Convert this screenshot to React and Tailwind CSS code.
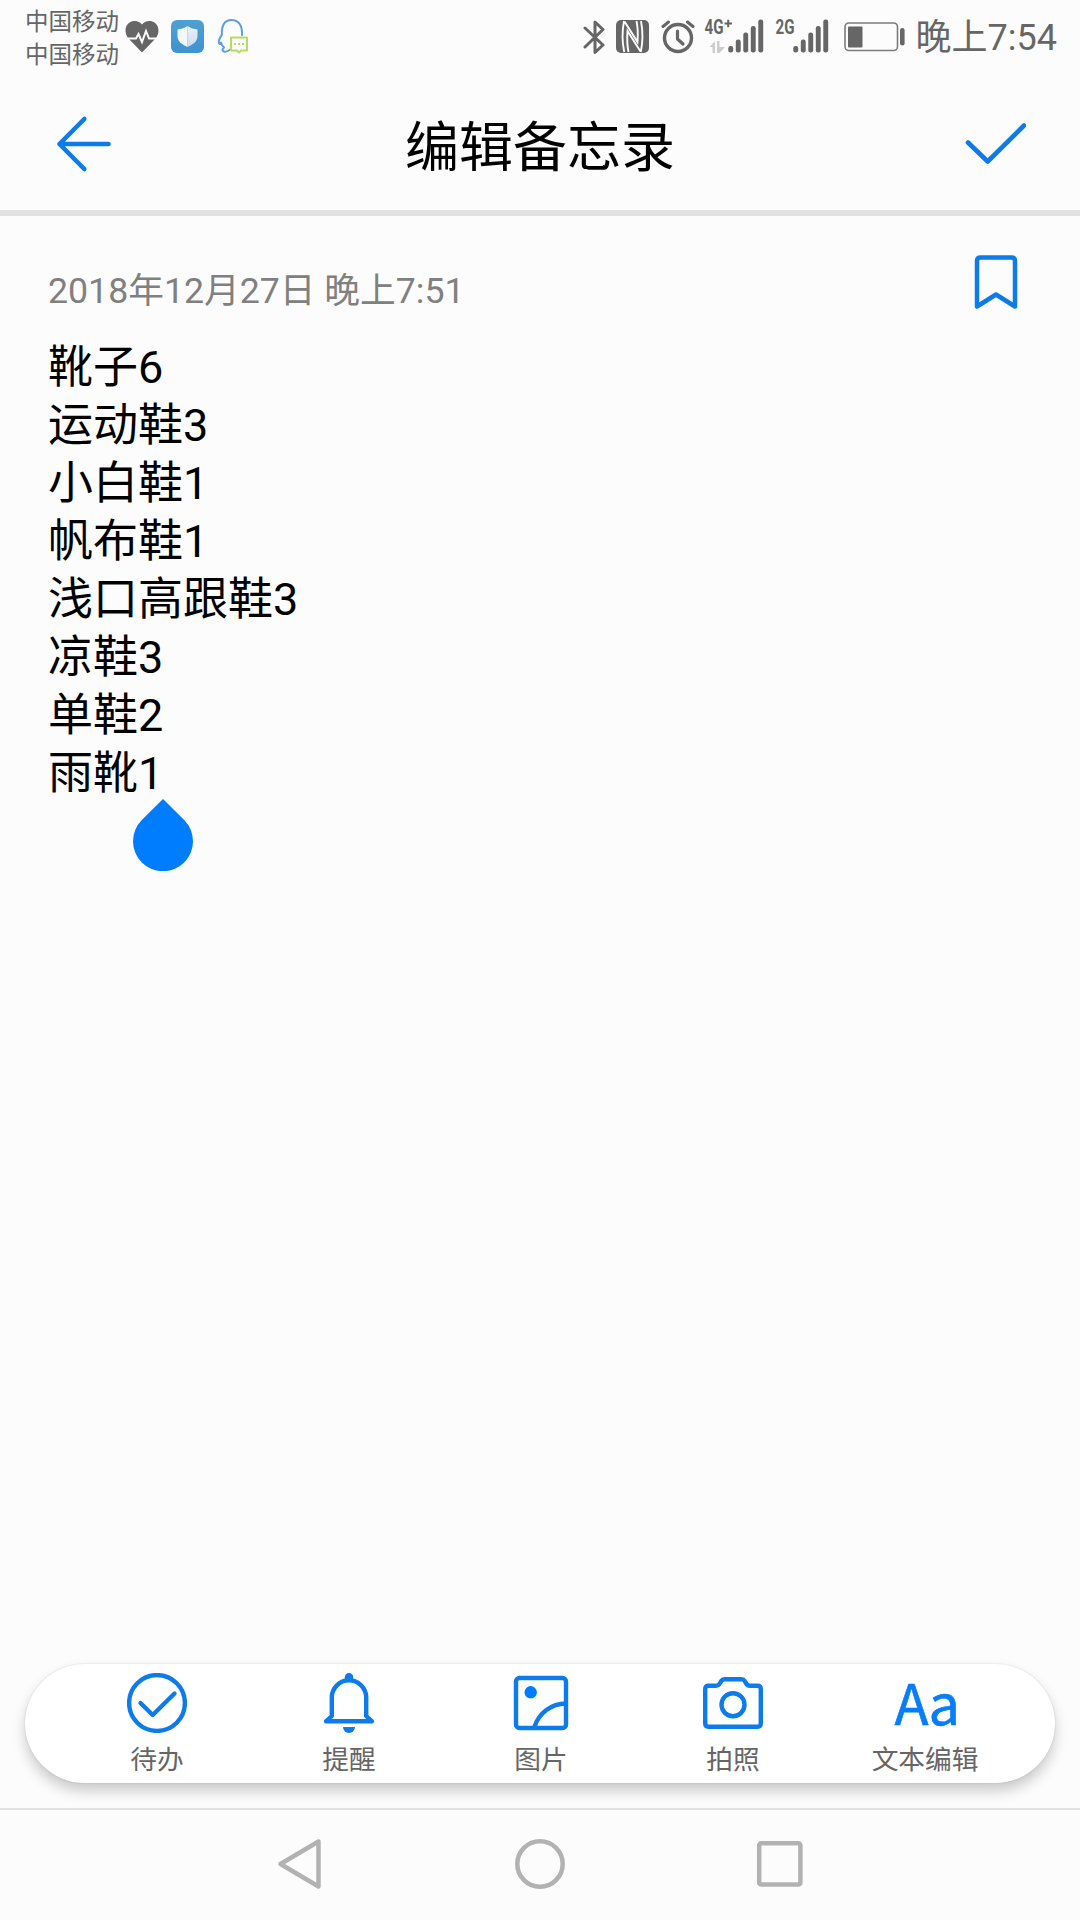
const noteLines = ['靴子6', '运动鞋3', '小白鞋1', '帆布鞋1', '浅口高跟鞋3', '凉鞋3', '单鞋2', '雨靴1'];

const HeartIcon = () => (
  <svg className="ml-[5px] h-10 w-9" viewBox="0 0 36 40">
    <path d="M18 36.500 L4 22 C-0.500 16 1 6.500 9.500 5 C13 4.500 16 6 18 8.500 C20 6 23 4.500 26.500 5 C35 6.500 36.500 16 32 22 Z" fill="#666666" />
    <path d="M0 22.500 H12 L14.500 18 L18 26 L22 15 L25 22.500 H36" fill="none" stroke="#fcfcfc" strokeWidth="2" />
  </svg>
);

const ShieldIcon = () => (
  <svg className="ml-[11px] h-[33px] w-[33px]" viewBox="0 0 33 33">
    <defs>
      <linearGradient id="shieldBg" x1="0" y1="0" x2="0" y2="1">
        <stop offset="0" stopColor="#4fa0d2" />
        <stop offset="1" stopColor="#3e93cf" />
      </linearGradient>
      <linearGradient id="shieldRight" x1="0" y1="0" x2="0" y2="1">
        <stop offset="0" stopColor="#eaf2f8" />
        <stop offset="1" stopColor="#c9deed" />
      </linearGradient>
    </defs>
    <rect width="33" height="33" rx="6" fill="url(#shieldBg)" />
    <path d="M16.500 6 C13 8.500 10 9 6.500 9.500 V16 C6.500 21.500 11 24.500 16.500 27 Z" fill="#f3f8fb" />
    <path d="M16.500 6 C20 8.500 23 9 26.500 9.500 V16 C26.500 21.500 22 24.500 16.500 27 Z" fill="url(#shieldRight)" />
  </svg>
);

const ChatIcon = () => (
  <svg className="ml-[13px] h-9 w-8" viewBox="0 0 32 36" fill="none" strokeLinejoin="round" strokeLinecap="round">
    <path d="M13 31.500 C11 34 6 34.500 5.500 32 C5.500 30.500 7 30 7 29.500 C5.500 28 4.500 26.500 4 24.500 C3 26.500 1.800 26.500 1.800 24 C1.800 21 3.500 19 4.800 17 C4.500 8 7 2 14.500 2 C22 2 25.500 8 25 17" stroke="#5c9fe0" strokeWidth="2" />
    <path d="M14 19.500 H30 V32.500 H24 L22 34.500 L20 32.500 H14 Z" fill="#fcfcfc" stroke="#b5dc60" strokeWidth="2" />
    <path d="M18 26 h0.100 M22 26 h0.100 M26 26 h0.100" stroke="#a9d548" strokeWidth="2.200" />
  </svg>
);

const BluetoothIcon = () => (
  <svg className="h-9 w-[22px]" viewBox="0 0 22 36" fill="none" stroke="#666666" strokeWidth="3" strokeLinejoin="round" strokeLinecap="round">
    <path d="M2 9 L20 26 L12 33.500 V3 L20 10.500 L2 28" />
  </svg>
);

// White ribbon cut out of a rounded grey tile
const NfcIcon = () => (
  <svg className="ml-[11px] h-[33px] w-[33px]" viewBox="0 0 33 33">
    <rect width="33" height="33" rx="5" fill="#666666" />
    <path d="M8 1 C6.300 10 6.300 23 8.200 32 M12.500 32 C11 25 11 18 11.500 11 L24.500 31.500 M25 1 C26.700 10 26.700 23 24.800 32 M20.500 1 C22 8 22 15 21.500 22 L8.500 1.500" fill="none" stroke="#fcfcfc" strokeWidth="1.900" />
  </svg>
);

const AlarmIcon = () => (
  <svg className="ml-3 h-[35px] w-[34px]" viewBox="0 0 34 35" fill="none" stroke="#666666" strokeLinecap="round">
    <circle cx="17" cy="19" r="13.500" strokeWidth="3.400" />
    <path d="M16.500 12 V20 L22 25" strokeWidth="3.200" strokeLinejoin="round" />
    <path d="M2 7.500 L7.500 3 M32 7.500 L26.500 3" strokeWidth="3" />
  </svg>
);

const SignalIcon = ({ label, labelX, data, className }) => (
  <svg className={className} viewBox="0 0 62 36" overflow="visible">
    <text x={labelX} y="15" fill="#666666" fontFamily="Roboto, sans-serif" fontWeight="700" fontSize="21" textLength="19" lengthAdjust="spacingAndGlyphs">
      {label}
    </text>
    {data && <path d="M21.500 4.500 h7.500 M25.200 0.800 v7.500" stroke="#666666" strokeWidth="2" />}
    {data && <path d="M6.500 28 L12 22 V34 H9.500 V28 Z M14 22 H16.500 V28 H22 L16.500 34 H14 Z" fill="#cccccc" />}
    {[27, 20.5, 13.5, 7, 0.5].map((top, i) => (
      <rect key={top} x={25.300 + i * 7.500} y={top} width="4.900" height={33.500 - top} rx="2.200" fill="#666666" />
    ))}
  </svg>
);

const BatteryIcon = () => (
  <svg className="ml-3.5 h-[30px] w-[62px]" viewBox="0 0 62 30">
    <rect x="1" y="1" width="52.500" height="27.500" rx="4" fill="none" stroke="#7b7b7b" strokeWidth="1.600" />
    <rect x="4" y="4.500" width="14.500" height="21" rx="1" fill="#666666" />
    <rect x="56" y="6" width="4.600" height="17.500" rx="2.200" fill="#666666" />
  </svg>
);

const StatusBar = () => (
  <div className="flex h-[72px] items-center pl-[25px] pr-[23px] text-[#666666]">
    <div className="w-[94px] pt-[5px] text-[23.500px] leading-[33px] whitespace-nowrap">
      <p>中国移动</p>
      <p>中国移动</p>
    </div>
    <HeartIcon />
    <ShieldIcon />
    <ChatIcon />
    <div className="ml-auto flex items-center pt-px">
      <BluetoothIcon />
      <NfcIcon />
      <AlarmIcon />
      <SignalIcon label="4G" labelX="1.500" data className="ml-2 h-9 w-[62px]" />
      <SignalIcon label="2G" labelX="7.500" className="ml-[3px] h-9 w-[62px]" />
      <BatteryIcon />
      <span className="ml-2.5 pt-[3px] text-4xl leading-[66px]">晚上7:54</span>
    </div>
  </div>
);

const tools = [
  {
    label: '待办',
    icon: (
      <>
        <circle cx="30" cy="30" r="27.900" />
        <path d="M13.500 30 L25.700 42 L47.500 20.500" />
      </>
    ),
  },
  {
    label: '提醒',
    icon: (
      <>
        <circle cx="30" cy="4.200" r="4.200" fill="#0d7bea" stroke="none" />
        <path d="M12.800 43 V24.500 A17.200 17.200 0 0 1 47.200 24.500 V43 L53 48.300 H7 Z" />
        <path d="M24 54 H36 A6 6 0 0 1 24 54 Z" fill="#0d7bea" stroke="none" />
      </>
    ),
  },
  {
    label: '图片',
    icon: (
      <>
        <rect x="5" y="5" width="50" height="50" rx="3.500" />
        <circle cx="19.700" cy="19.300" r="6.200" fill="#007dff" stroke="none" />
        <path d="M23.500 54 A33 33 0 0 1 55 30.500" />
      </>
    ),
  },
  {
    label: '拍照',
    icon: (
      <>
        <path d="M5.500 12.700 H13 Q15.500 12.700 16.800 10.500 L18.300 8 Q19.300 6.300 21.500 6.300 H38.500 Q40.700 6.300 41.700 8 L43.200 10.500 Q44.500 12.700 47 12.700 H54.500 Q57.800 12.700 57.800 16.200 V50.200 Q57.800 53.700 54.500 53.700 H5.500 Q2.200 53.700 2.200 50.200 V16.200 Q2.200 12.700 5.500 12.700 Z" />
        <circle cx="30" cy="31.700" r="11.500" />
      </>
    ),
  },
  { label: '文本编辑' },
];

const Toolbar = () => (
  <div className="mx-[25px] flex h-[119px] rounded-full bg-white pl-9 pr-[34px] shadow-[0_8px_14px_rgba(0,0,0,0.2),0_0_2px_rgba(0,0,0,0.15)]">
    {tools.map((tool) => (
      <button key={tool.label} className="flex flex-1 flex-col items-center pt-[9px]">
        {tool.icon ? (
          <svg className="h-[60px] w-[60px]" viewBox="0 0 60 60" fill="none" stroke="#0d7bea" strokeWidth="4.400" strokeLinecap="round" strokeLinejoin="round">
            {tool.icon}
          </svg>
        ) : (
          <span className="h-[60px] pl-[3px] font-['Noto_Sans_CJK_SC',sans-serif] text-[56px] leading-[55px] tracking-[-1.500px] text-[#067dfa] [-webkit-text-stroke:0.600px_#067dfa]">Aa</span>
        )}
        <span className="mt-[9px] text-[26.700px] leading-[36px] whitespace-nowrap text-[#666666]">{tool.label}</span>
      </button>
    ))}
  </div>
);

const NavBar = () => (
  <div className="mt-[25px] flex h-28 items-center justify-between border-t-2 border-[#e2e2e2] pr-[276px] pb-0.5 pl-[276px]">
    <svg className="h-[52px] w-12" viewBox="0 0 48 52" fill="none" stroke="#b2b2b2" strokeWidth="4.500" strokeLinejoin="round">
      <path d="M42.500 3.500 V48.500 L4.500 26 Z" />
    </svg>
    <svg className="h-[50px] w-[50px]" viewBox="0 0 50 50" fill="none" stroke="#b2b2b2" strokeWidth="4.500">
      <circle cx="25" cy="25" r="22.700" />
    </svg>
    <svg className="h-12 w-12" viewBox="0 0 48 48" fill="none" stroke="#b2b2b2" strokeWidth="4.500">
      <rect x="3.200" y="3.200" width="41.200" height="41.200" rx="2" />
    </svg>
  </div>
);

const App = () => {
  return (
    <div className="flex h-[1920px] w-[1080px] flex-col overflow-hidden bg-[#fcfcfc] font-[Roboto,'Noto_Sans_CJK_SC',sans-serif] text-black" lang="zh-CN">
      <StatusBar />

      {/* Title bar */}
      <header className="flex h-36 items-center justify-between border-b-[6px] border-[#e2e2e2] px-[54px] pt-1">
        <svg className="h-[60px] w-[60px]" viewBox="0 0 60 60" fill="none" stroke="#0d7bea" strokeWidth="4.600" strokeLinecap="round" strokeLinejoin="round">
          <path d="M30.300 6 L5.500 31 L30.300 56 M5.500 31 H54.500" />
        </svg>
        <h1 className="pt-3 pl-0.5 text-[54px] leading-[80px]">编辑备忘录</h1>
        <svg className="h-[60px] w-[62px]" viewBox="0 0 62 60" fill="none" stroke="#0d7bea" strokeWidth="4.600" strokeLinecap="round" strokeLinejoin="round">
          <path d="M4 29.500 L23.700 48.500 L60 12.500" />
        </svg>
      </header>

      {/* Note */}
      <main className="flex-1 pl-12 pr-[61px]">
        <div className="flex h-[123px] items-start justify-between">
          <p className="mt-12 text-[35.700px] leading-[54px] text-[#808080]">2018年12月27日 晚上7:51</p>
          <svg className="mt-[37px] h-[60px] w-[46px]" viewBox="0 0 46 60" fill="none" stroke="#0d7bea" strokeWidth="4.500" strokeLinejoin="round">
            <path d="M4 53.500 V8 Q4 4.500 7.500 4.500 H38.500 Q42 4.500 42 8 V53.500 L23 41.500 Z" />
          </svg>
        </div>
        {noteLines.map((line) => (
          <p key={line} className="text-[45px] leading-[58px]">{line}</p>
        ))}
        {/* Cursor handle */}
        <svg className="-mt-1 ml-[85px] h-[72px] w-[60px]" viewBox="0 0 60 72">
          <path d="M30 0 L51.200 21 A30 30 0 1 1 8.800 21 Z" fill="#007dff" />
        </svg>
      </main>

      <Toolbar />
      <NavBar />
    </div>
  );
};

export default App;
